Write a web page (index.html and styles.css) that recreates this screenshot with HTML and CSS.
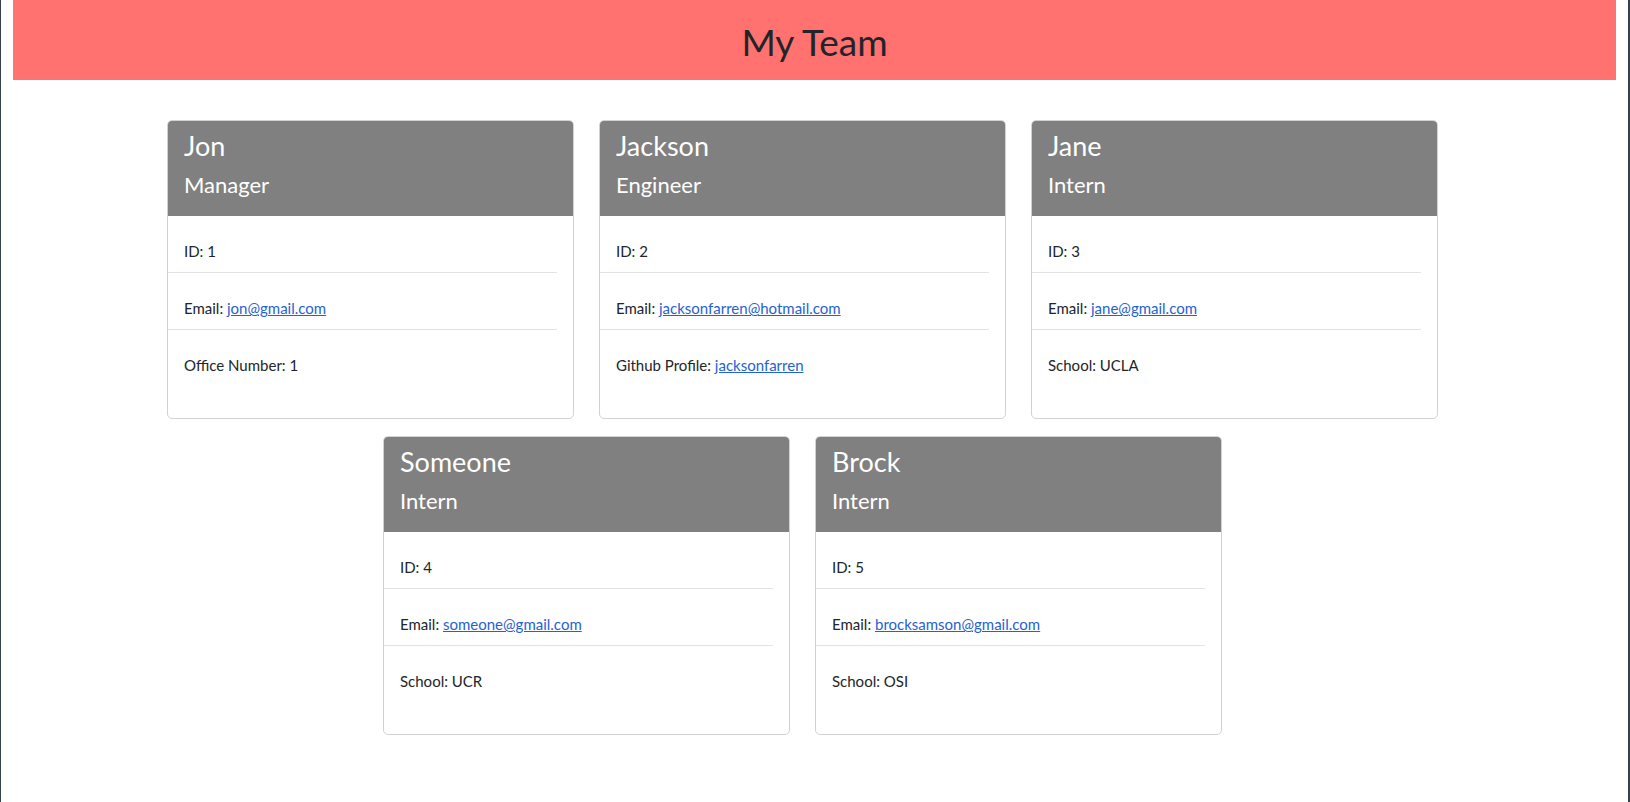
FILE: index.html
```html
<!DOCTYPE html>
<html lang="en">
<head>
<meta charset="utf-8">
<title>My Team</title>
<link rel="stylesheet" href="styles.css">
</head>
<body>
<header class="banner">
  <h1 class="banner-title">My Team</h1>
</header>
<main class="team">
  <div class="card">
    <div class="card-header">
      <h3 class="card-name">Jon</h3>
      <h4 class="card-role">Manager</h4>
    </div>
    <ul class="card-list">
      <li class="card-item">ID: 1</li>
      <li class="card-item">Email: <a href="mailto:jon@gmail.com">jon@gmail.com</a></li>
      <li class="card-item">Office Number: 1</li>
    </ul>
  </div>
  <div class="card">
    <div class="card-header">
      <h3 class="card-name">Jackson</h3>
      <h4 class="card-role">Engineer</h4>
    </div>
    <ul class="card-list">
      <li class="card-item">ID: 2</li>
      <li class="card-item">Email: <a href="mailto:jacksonfarren@hotmail.com">jacksonfarren@hotmail.com</a></li>
      <li class="card-item">Github Profile: <a href="#">jacksonfarren</a></li>
    </ul>
  </div>
  <div class="card">
    <div class="card-header">
      <h3 class="card-name">Jane</h3>
      <h4 class="card-role">Intern</h4>
    </div>
    <ul class="card-list">
      <li class="card-item">ID: 3</li>
      <li class="card-item">Email: <a href="mailto:jane@gmail.com">jane@gmail.com</a></li>
      <li class="card-item">School: UCLA</li>
    </ul>
  </div>
  <div class="card">
    <div class="card-header">
      <h3 class="card-name">Someone</h3>
      <h4 class="card-role">Intern</h4>
    </div>
    <ul class="card-list">
      <li class="card-item">ID: 4</li>
      <li class="card-item">Email: <a href="mailto:someone@gmail.com">someone@gmail.com</a></li>
      <li class="card-item">School: UCR</li>
    </ul>
  </div>
  <div class="card">
    <div class="card-header">
      <h3 class="card-name">Brock</h3>
      <h4 class="card-role">Intern</h4>
    </div>
    <ul class="card-list">
      <li class="card-item">ID: 5</li>
      <li class="card-item">Email: <a href="mailto:brocksamson@gmail.com">brocksamson@gmail.com</a></li>
      <li class="card-item">School: OSI</li>
    </ul>
  </div>
</main>
</body>
</html>
```
FILE: styles.css
```css
* { box-sizing: border-box; }

html {
  background: #ffffff;
}

body {
  margin: 0;
  min-height: 802px;
  border-left: 1px solid #34434c;
  border-right: 2px solid #34434c;
  font-family: "Lato", "Open Sans", sans-serif;
  color: #212529;
  font-size: 15px;
  line-height: 24px;
  background: #ffffff;
}

.banner {
  margin: 0 12px;
  height: 80px;
  background: #ff7270;
  display: flex;
  align-items: center;
  justify-content: center;
}

.banner-title {
  margin: 0;
  padding-top: 3px;
  font-size: 37px;
  font-weight: 400;
  line-height: 48px;
  color: #212529;
}

.team {
  width: 1271px;
  margin: 40px 0 0 166px;
  display: flex;
  flex-wrap: wrap;
  justify-content: center;
  column-gap: 25px;
  row-gap: 17px;
}

.card {
  width: 407px;
  border: 1px solid #d2d2d2;
  border-radius: 5px;
  overflow: hidden;
  padding-bottom: 32px;
  background: #fff;
}

.card-header {
  background: #808080;
  color: #ffffff;
  padding: 8px 16px 8px;
  height: 95px;
}

.card-name {
  margin: 0 0 8px;
  font-size: 27px;
  line-height: 33px;
  font-weight: 400;
}

.card-role {
  margin: 0;
  font-size: 22px;
  line-height: 29px;
  font-weight: 400;
}

.card-list {
  list-style: none;
  margin: 0 16px 0 0;
  padding: 0;
}

.card-item {
  padding: 23px 16px 9px;
  border-bottom: 1px solid #e2e2e2;
}

.card-item:last-child {
  border-bottom: none;
}

.card-item a {
  color: #1f62d2;
  text-decoration: underline;
}
```
